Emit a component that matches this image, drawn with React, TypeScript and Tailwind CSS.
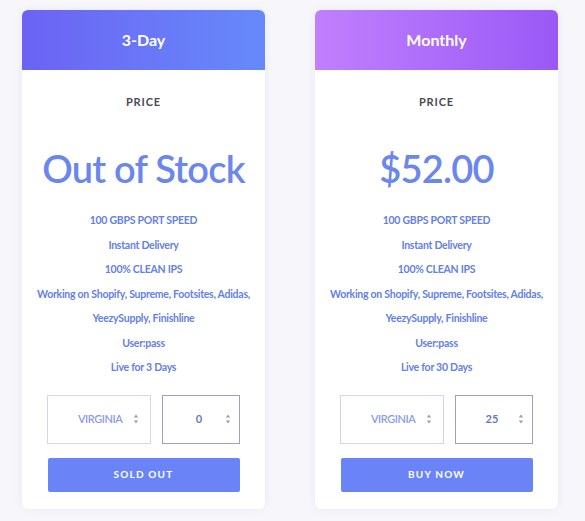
import React from 'react';

// ---------------------------------------------------------------------------
// Data
// ---------------------------------------------------------------------------

type Plan = {
  name: string;
  price: string;
  features: string[];
  qty: string;
  action: string;
  header: string;
};

const baseFeatures = [
  '100 GBPS PORT SPEED',
  'Instant Delivery',
  '100% CLEAN IPS',
  'Working on Shopify, Supreme, Footsites, Adidas,',
  'YeezySupply, Finishline',
  'User:pass',
];

const plans: Plan[] = [
  {
    name: '3-Day',
    price: 'Out of Stock',
    features: [...baseFeatures, 'Live for 3 Days'],
    qty: '0',
    action: 'SOLD OUT',
    header: 'bg-gradient-to-r from-[#6c62f4] to-[#6689fa]',
  },
  {
    name: 'Monthly',
    price: '$52.00',
    features: [...baseFeatures, 'Live for 30 Days'],
    qty: '25',
    action: 'BUY NOW',
    header: 'bg-gradient-to-r from-[#c17ffd] to-[#9a58f6]',
  },
];

// ---------------------------------------------------------------------------
// Pieces
// ---------------------------------------------------------------------------

function Spinner() {
  return (
    <svg width="6" height="12" viewBox="0 0 6 12" className="shrink-0 text-[#9aa0b8]" fill="currentColor">
      <path d="M3 1.5L5.2 4.5H0.8z" />
      <path d="M3 10.5L0.8 7.5H5.2z" />
    </svg>
  );
}

function PlanCard({ plan }: { plan: Plan }) {
  return (
    <div className="w-[243px] rounded-md bg-white shadow-[0_0_10px_rgba(120,130,200,0.12)] overflow-hidden">
      <div className={`h-[60px] flex items-center justify-center ${plan.header}`}>
        <span className="text-white text-[16px] font-bold">{plan.name}</span>
      </div>

      <div className="flex flex-col items-center pt-[24px] pb-[17px]">
        <p className="text-[11px] font-bold tracking-[0.08em] text-[#4a4a55] leading-[16px]">PRICE</p>

        <p className="mt-[35px] text-[38px] leading-[46px] font-semibold text-[#6b86ee] tracking-[-0.02em]">
          {plan.price}
        </p>

        <ul className="mt-[18px] flex flex-col items-center">
          {plan.features.map((f) => (
            <li key={f} className="h-[24.5px] flex items-center text-[10.5px] font-bold text-[#6580e6] tracking-[-0.025em]">
              {f}
            </li>
          ))}
        </ul>

        <div className="mt-[14px] flex gap-[11px]">
          <div className="w-[104px] h-[49px] border border-[#d3d6ee] flex items-center pl-[30px] pr-[11px]">
            <span className="flex-1 text-[11px] font-semibold text-[#8d9be8] tracking-[-0.04em]">VIRGINIA</span>
            <Spinner />
          </div>
          <div className="w-[78px] h-[49px] border border-[#9aa0c8] flex items-center pl-[10px] pr-[8px]">
            <span className="flex-1 text-center text-[11px] font-bold text-[#6a78c8]">{plan.qty}</span>
            <Spinner />
          </div>
        </div>

        <button className="mt-[14px] w-[192px] h-[34px] rounded-[2px] bg-[#6a84f8] text-white text-[10px] font-bold tracking-[0.12em]">
          {plan.action}
        </button>
      </div>
    </div>
  );
}

// ---------------------------------------------------------------------------
// Page
// ---------------------------------------------------------------------------

export default function App() {
  return (
    <div className="w-[585px] h-[521px] bg-[#f7f7fb] font-['Lato','Open_Sans',sans-serif] overflow-hidden">
      <div className="flex gap-[50px] pl-[22px] pt-[10px]">
        {plans.map((p) => (
          <PlanCard key={p.name} plan={p} />
        ))}
      </div>
    </div>
  );
}
